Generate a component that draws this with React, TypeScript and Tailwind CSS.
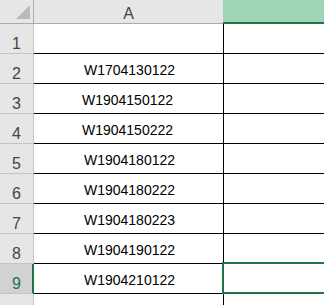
import React from 'react';

type Row = { n: number; value: string; shift: string };

const rows: Row[] = [
  { n: 1, value: '', shift: '' },
  { n: 2, value: 'W1704130122', shift: 'pl-[2px]' },
  { n: 3, value: 'W1904150122', shift: 'pr-[2px]' },
  { n: 4, value: 'W1904150222', shift: 'pr-[2px]' },
  { n: 5, value: 'W1904180122', shift: 'pl-[2px]' },
  { n: 6, value: 'W1904180222', shift: 'pl-[2px]' },
  { n: 7, value: 'W1904180223', shift: 'pl-[2px]' },
  { n: 8, value: 'W1904190122', shift: 'pl-[2px]' },
  { n: 9, value: 'W1904210122', shift: 'pl-[2px]' },
  { n: 10, value: 'W1905200122', shift: 'pl-[2px]' },
];

const SELECTED = 9;

export default function App() {
  return (
    <div className="w-[324px] h-[305px] overflow-hidden bg-white font-['Liberation_Sans',Arial,sans-serif]">
      {/* column headers */}
      <div className="flex h-[24px]">
        <div className="w-[34px] shrink-0 bg-[#e6e6e6] border-r border-b border-[#ababab] relative">
          <svg className="absolute left-0 top-0" width="33" height="23" viewBox="0 0 33 23">
            <polygon points="30,5 30,19 16,19" fill="#b9b9b9" />
          </svg>
        </div>
        <div className="w-[189px] shrink-0 bg-[#e6e6e6] border-b border-[#ababab] text-center text-[16px] leading-[18px] pt-[5px] text-[#444]">
          A
        </div>
        <div className="flex-1 bg-[#9fd5b7] border-b-2 border-[#217346]" />
      </div>

      {rows.map((r) => {
        const sel = r.n === SELECTED;
        return (
          <div key={r.n} className="flex h-[30px]">
            <div
              className={
                sel
                  ? 'w-[34px] shrink-0 bg-[#d2d2d2] border-r-2 border-b border-r-[#217346] border-b-[#c4c4c4] flex items-end justify-center text-[16px] leading-[18px] text-[#217346]'
                  : 'w-[34px] shrink-0 bg-[#e6e6e6] border-r border-b border-[#c4c4c4] flex items-end justify-center text-[16px] leading-[18px] text-[#444]'
              }
            >
              <span className={sel ? 'pl-[1px]' : ''}>{r.n}</span>
            </div>
            <div
              className={`w-[190px] shrink-0 border-r border-b border-black flex items-end justify-center pb-[5px] text-[14px] leading-[16px] text-black ${r.shift}`}
            >
              {r.value}
            </div>
            <div className="flex-1 border-b border-black relative">
              {sel && (
                <div className="absolute left-[-2px] top-[-2px] bottom-[-1px] right-[-10px] border-2 border-[#217346]" />
              )}
            </div>
          </div>
        );
      })}
    </div>
  );
}
